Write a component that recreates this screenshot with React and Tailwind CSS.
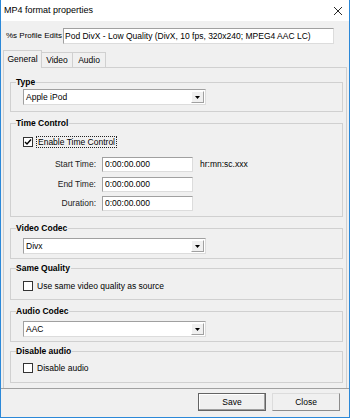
import React from 'react';

const FONT = "font-['Liberation_Sans',Arial,sans-serif]";

function Combo({ value }) {
    return (
        <div className="flex h-[16px] w-[183px] border border-[#a0a0a0] border-r-[#dcdcdc] border-b-[#dcdcdc] bg-white">
            <div className="flex flex-1 items-center pl-[2px] text-[8.5px] leading-none text-black">{value}</div>
            <div className="my-[1px] mr-[1px] flex w-[13px] items-center justify-center border border-white border-r-[#a0a0a0] border-b-[#a0a0a0] bg-[#f0f0f0]">
                <svg width="5" height="3" viewBox="0 0 5 3"><path d="M0 0h5L2.5 3z" fill="#000" /></svg>
            </div>
        </div>
    );
}

function Edit({ value }) {
    return (
        <div className="flex h-[15px] w-[91px] items-center border border-[#a0a0a0] border-r-[#dcdcdc] border-b-[#dcdcdc] bg-white pl-[2px] text-[8.5px] leading-none">
            {value}
        </div>
    );
}

function Check({ checked, label, focus }) {
    return (
        <div className="flex h-[12px] items-center gap-[3px]">
            <div className="flex h-[10px] w-[10px] items-center justify-center border border-[#333] bg-white">
                {checked && (
                    <svg width="8" height="8" viewBox="0 0 8 8"><path d="M1 4l2 2 4-4.5" fill="none" stroke="#000" strokeWidth="1.4" /></svg>
                )}
            </div>
            <div className={`flex h-[12px] items-center px-[1px] text-[8.5px] leading-none ${focus ? 'border border-dotted border-[#222]' : ''}`}>{label}</div>
        </div>
    );
}

function Group({ title, className, children }) {
    return (
        <fieldset className={`ml-[6px] mr-[3px] border border-[#d0d0d0] pl-[5px] ${className}`}>
            <legend className="pr-[1px] text-[8.5px] font-bold leading-[10px] text-black">{title}</legend>
            <div className="ml-[7px]">{children}</div>
        </fieldset>
    );
}

function TimeRow({ label, value, hint, className }) {
    return (
        <div className={`flex items-center ${className}`}>
            <div className="w-[73px] text-right text-[8.5px] leading-none text-[#222]">{label}</div>
            <div className="ml-[6px]"><Edit value={value} /></div>
            {hint && <div className="ml-[7px] text-[8.5px] leading-none">{hint}</div>}
        </div>
    );
}

export default function App() {
    return (
        <div className={`flex h-[418px] w-[350px] flex-col border-x border-b border-[#2b88d8] bg-[#f0f0f0] text-black ${FONT}`}>
            {/* TITLE BAR */}
            <div className="flex h-[21px] shrink-0 items-center justify-between bg-white pl-[3px] pr-[7px]">
                <span className="text-[9px] leading-none">MP4 format properties</span>
                <svg width="8" height="8" viewBox="0 0 8 8"><path d="M0 0l8 8M8 0L0 8" stroke="#111" strokeWidth="0.9" /></svg>
            </div>

            {/* PROFILE */}
            <div className="flex items-center pl-[5px] pt-[7px]">
                <div className="w-[57px] whitespace-nowrap text-[8px] leading-none">%s Profile Edits</div>
                <div className="flex h-[16px] w-[271px] items-center overflow-hidden whitespace-nowrap border border-[#a0a0a0] border-r-[#dcdcdc] border-b-[#dcdcdc] bg-white pl-[1px] text-[8.5px] leading-none">
                    Pod DivX - Low Quality (DivX, 10 fps, 320x240; MPEG4 AAC LC)
                </div>
            </div>

            {/* TABS */}
            <div className="ml-[2px] mt-[6px] flex h-[17px] items-end text-[8.5px] leading-none">
                <div className="relative z-10 -mb-px flex h-[18px] w-[39px] items-center justify-center border border-b-0 border-[#d0d0d0] bg-[#f0f0f0] pb-[1px]">General</div>
                <div className="flex h-[15px] w-[31px] items-center justify-center border-r border-t border-[#d0d0d0]">Video</div>
                <div className="flex h-[15px] w-[33px] items-center justify-center border-r border-t border-[#d0d0d0]">Audio</div>
            </div>

            {/* PANEL */}
            <div className="mx-[2px] flex-1 border border-b-0 border-[#d0d0d0] pt-[9px]">
                <Group title="Type" className="pb-[6px]">
                    <div className="mt-[2px]"><Combo value="Apple iPod" /></div>
                </Group>

                <Group title="Time Control" className="mt-[6px] pb-[5px]">
                    <div className="mt-[8px]"><Check checked label="Enable Time Control" focus /></div>
                    <TimeRow className="mt-[9px]" label="Start Time:" value="0:00:00.000" hint="hr:mn:sc.xxx" />
                    <TimeRow className="mt-[5px]" label="End Time:" value="0:00:00.000" />
                    <TimeRow className="mt-[4px]" label="Duration:" value="0:00:00.000" />
                </Group>

                <Group title="Video Codec" className="mt-[6px] pb-[4px]">
                    <div className="mt-[5px]"><Combo value="Divx" /></div>
                </Group>

                <Group title="Same Quality" className="mt-[4px] pb-[7px]">
                    <div className="mt-[7px]"><Check label="Use same video quality as source" /></div>
                </Group>

                <Group title="Audio Codec" className="mt-[6px] pb-[4px]">
                    <div className="mt-[5px]"><Combo value="AAC" /></div>
                </Group>

                <Group title="Disable audio" className="mt-[4px] pb-[8px]">
                    <div className="mt-[6px]"><Check label="Disable audio" /></div>
                </Group>
            </div>

            {/* SEPARATOR */}
            <div className="h-px shrink-0 bg-[#a0a0a0]" />

            {/* BUTTONS */}
            <div className="flex shrink-0 justify-end gap-[6px] pb-[6px] pr-[9px] pt-[4px] text-[8.5px] leading-none">
                <button className="flex h-[18px] w-[68px] items-center justify-center border border-[#646464] bg-[#f0f0f0] shadow-[inset_-1px_-1px_0_#a0a0a0,inset_1px_1px_0_#ffffff]">Save</button>
                <button className="flex h-[18px] w-[68px] items-center justify-center border border-[#dcdcdc] border-b-[#8c8c8c] border-r-[#8c8c8c] bg-[#f0f0f0]">Close</button>
            </div>
        </div>
    );
}
